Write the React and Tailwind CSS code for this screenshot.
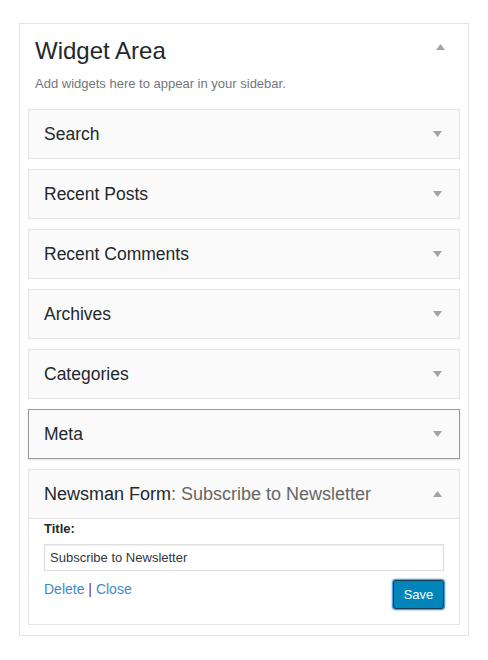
import React from 'react';

const widgets = ['Search', 'Recent Posts', 'Recent Comments', 'Archives', 'Categories', 'Meta'];

function Arrow({ up }) {
  return (
    <svg width="9" height="6" viewBox="0 0 9 6" className="shrink-0">
      {up ? <path d="M0 6 L4.5 0 L9 6 Z" fill="#a0a5aa" /> : <path d="M0 0 L9 0 L4.5 6 Z" fill="#a0a5aa" />}
    </svg>
  );
}

function WidgetRow({ title }) {
  const active = title === 'Meta';
  return (
    <div
      className={
        'h-[50px] flex items-center justify-between pl-[15px] pr-[17px] bg-[#fafafa] border ' +
        (active ? 'border-[#999] shadow-[0_1px_2px_rgba(0,0,0,0.12)]' : 'border-[#e5e5e5]')
      }
    >
      <span className="text-[17.5px] leading-[22px] text-[#23282d]">{title}</span>
      <Arrow />
    </div>
  );
}

export default function App() {
  return (
    <div className="w-[488px] h-[660px] bg-white pt-[23px] pl-[19px]" style={{ fontFamily: '"Liberation Sans", Arial, sans-serif' }}>
      <div className="w-[450px] border border-[#e5e5e5] bg-white px-2 pb-[10px]">
        <div className="px-[7px] pt-[13px]">
          <div className="flex items-center justify-between">
            <h2 className="text-[24px] leading-[28px] text-[#23282d]">Widget Area</h2>
            <div className="pr-[8px] -mt-[8px]">
              <Arrow up />
            </div>
          </div>
          <p className="mt-[10px] text-[13px] leading-[18px] text-[#72777c]">Add widgets here to appear in your sidebar.</p>
        </div>

        <div className="mt-[16px] flex flex-col gap-[10px]">
          {widgets.map((w) => (
            <WidgetRow key={w} title={w} />
          ))}

          <div className="border border-[#e5e5e5] bg-white">
            <div className="h-[49px] flex items-center justify-between pl-[15px] pr-[17px] bg-[#fafafa] border-b border-[#e5e5e5]">
              <span className="text-[18px] leading-[22px] text-[#23282d]">
                Newsman Form<span className="text-[#666]">: Subscribe to Newsletter</span>
              </span>
              <Arrow up />
            </div>
            <div className="px-[15px] pt-[1px] pb-[15px]">
              <label className="block text-[13px] leading-[18px] font-bold text-[#23282d]">Title:</label>
              <input
                readOnly
                value="Subscribe to Newsletter"
                className="mt-[6px] block w-[400px] h-[27px] border border-[#ddd] px-[5px] text-[13px] text-[#32373c] outline-none shadow-[inset_0_1px_2px_rgba(0,0,0,0.07)]"
                style={{ fontFamily: '"Liberation Sans", Arial, sans-serif' }}
              />
              <div className="mt-[8px] flex items-start justify-between">
                <div className="pt-px text-[14px] leading-[18px]">
                  <a className="text-[#3f8ac9]">Delete</a>
                  <span className="text-[#6b2d8a]"> | </span>
                  <a className="text-[#3f8ac9]">Close</a>
                </div>
                <button className="mt-px w-[51px] h-[29px] rounded-[3px] bg-[#0085ba] border border-[#1e3a55] text-white text-[13px] shadow-[0_0_0_1px_#5b9dd9,0_0_2px_1px_rgba(30,140,190,0.8)]">
                  Save
                </button>
              </div>
            </div>
          </div>
        </div>
      </div>
    </div>
  );
}
